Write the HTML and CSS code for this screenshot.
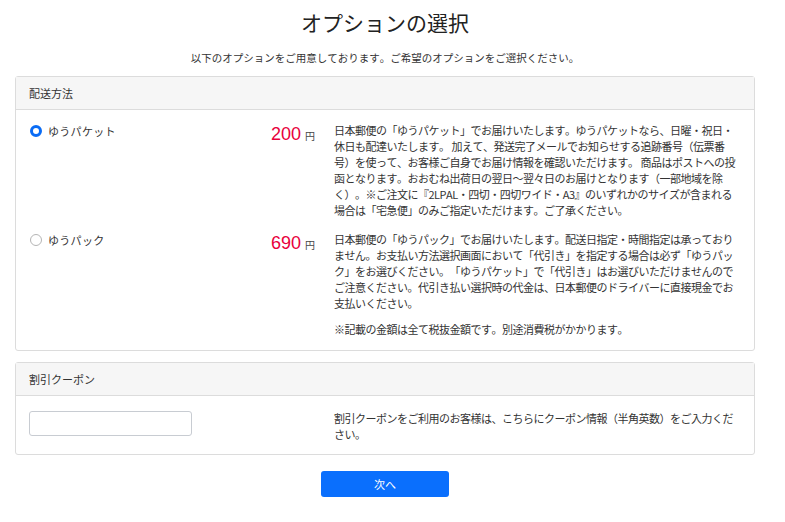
FILE: index.html
```html
<!DOCTYPE html>
<html lang="ja">
<head>
<meta charset="utf-8">
<link rel="stylesheet" href="styles.css">
</head>
<body>
<div class="page">
  <h1 class="title">オプションの選択</h1>
  <p class="lead">以下のオプションをご用意しております。ご希望のオプションをご選択ください。</p>

  <section class="card">
    <div class="card-header">配送方法</div>
    <div class="card-body shipping">
      <div class="option">
        <label class="opt-label"><span class="radio checked"></span>ゆうパケット</label>
        <div class="price"><span class="num">200</span><span class="yen">円</span></div>
        <div class="desc">
          <p>日本郵便の「ゆうパケット」でお届けいたします。ゆうパケットなら、日曜・祝日・休日も配達いたします。 加えて、発送完了メールでお知らせする追跡番号（伝票番号）を使って、お客様ご自身でお届け情報を確認いただけます。 商品はポストへの投函となります。おおむね出荷日の翌日〜翌々日のお届けとなります（一部地域を除く）。※ご注文に『2LPAL・四切・四切ワイド・A3』のいずれかのサイズが含まれる場合は「宅急便」のみご指定いただけます。ご了承ください。</p>
        </div>
      </div>
      <div class="option">
        <label class="opt-label"><span class="radio"></span>ゆうパック</label>
        <div class="price"><span class="num">690</span><span class="yen">円</span></div>
        <div class="desc">
          <p>日本郵便の「ゆうパック」でお届けいたします。配送日指定・時間指定は承っておりません。お支払い方法選択画面において「代引き」を指定する場合は必ず「ゆうパック」をお選びください。「ゆうパケット」で「代引き」はお選びいただけませんのでご注意ください。代引き払い選択時の代金は、日本郵便のドライバーに直接現金でお支払いください。</p>
          <p>※記載の金額は全て税抜金額です。別途消費税がかかります。</p>
        </div>
      </div>
    </div>
  </section>

  <section class="card">
    <div class="card-header">割引クーポン</div>
    <div class="card-body coupon">
      <div class="coupon-left"><input class="coupon-input" type="text"></div>
      <div class="desc"><p>割引クーポンをご利用のお客様は、こちらにクーポン情報（半角英数）をご入力ください。</p></div>
    </div>
  </section>

  <div class="actions"><button class="btn-next" type="button">次へ</button></div>
</div>
</body>
</html>
```

FILE: styles.css
```css
* { box-sizing: border-box; }
html, body { margin: 0; padding: 0; background: #fff; }
body {
  font-family: "Noto Sans CJK JP", "Noto Sans", "Liberation Sans", sans-serif;
  color: #333;
  font-size: 11px;
  text-spacing-trim: space-all;
  font-kerning: none;
}
.page {
  width: 740px;
  margin-left: 15px;
  padding-top: 7px;
}
.title {
  margin: 0;
  text-align: center;
  font-size: 21px;
  font-weight: 400;
  line-height: 30px;
  color: #222;
}
.lead {
  margin: 13px 0 0;
  text-align: center;
  font-size: 10.5px;
  line-height: 16px;
}
.card {
  border: 1px solid #dcdcdc;
  border-radius: 3px;
  margin-top: 11px;
  background: #fff;
}
.lead + .card { margin-top: 10px; }
.card-header {
  height: 33px;
  line-height: 32px;
  padding: 0 13px;
  background: #f6f6f6;
  border-bottom: 1px solid #dcdcdc;
  font-size: 11px;
  color: #333;
}
.card-body {
  padding: 12px 12px 0 13px;
}
.option {
  display: grid;
  grid-template-columns: 1fr auto 408px;
  column-gap: 19px;
  margin-bottom: 3px;
}
.opt-label {
  display: flex;
  align-items: center;
  height: 16px;
  line-height: 16px;
  font-size: 11px;
  color: #333;
  letter-spacing: 0.3px;
  margin-top: 1px;
}
.radio {
  width: 12px;
  height: 12px;
  border-radius: 50%;
  border: 1px solid #b5b5b5;
  background: #fff;
  margin-right: 6px;
  margin-left: 1px;
  flex: none;
}
.radio.checked {
  border: 3.5px solid #0a6cf5;
  background: #fff;
}
.price {
  display: flex;
  align-items: baseline;
  height: 18px;
  margin-top: 3px;
}
.price .num {
  font-family: "Liberation Sans", "Noto Sans", sans-serif;
  font-size: 18px;
  color: #e8003c;
  line-height: 18px;
}
.price .yen {
  font-size: 10px;
  color: #444;
  margin-left: 4px;
}
.desc p {
  margin: 0 0 10px;
  font-size: 11px;
  line-height: 16px;
  color: #333;
  letter-spacing: -0.5px;
}
.coupon {
  display: grid;
  grid-template-columns: 1fr 408px;
  column-gap: 19px;
  padding-top: 14px;
  padding-bottom: 2px;
}
.coupon-input {
  display: block;
  margin-top: 1px;
  width: 163px;
  height: 25px;
  border: 1px solid #c8ccd2;
  border-radius: 3px;
  background: #fff;
}
.actions {
  display: flex;
  justify-content: center;
  margin-top: 16px;
}
.btn-next {
  width: 128px;
  height: 26px;
  border: none;
  border-radius: 3px;
  background: #0a6ffd;
  color: #fff;
  font-family: inherit;
  font-size: 11px;
}
```
